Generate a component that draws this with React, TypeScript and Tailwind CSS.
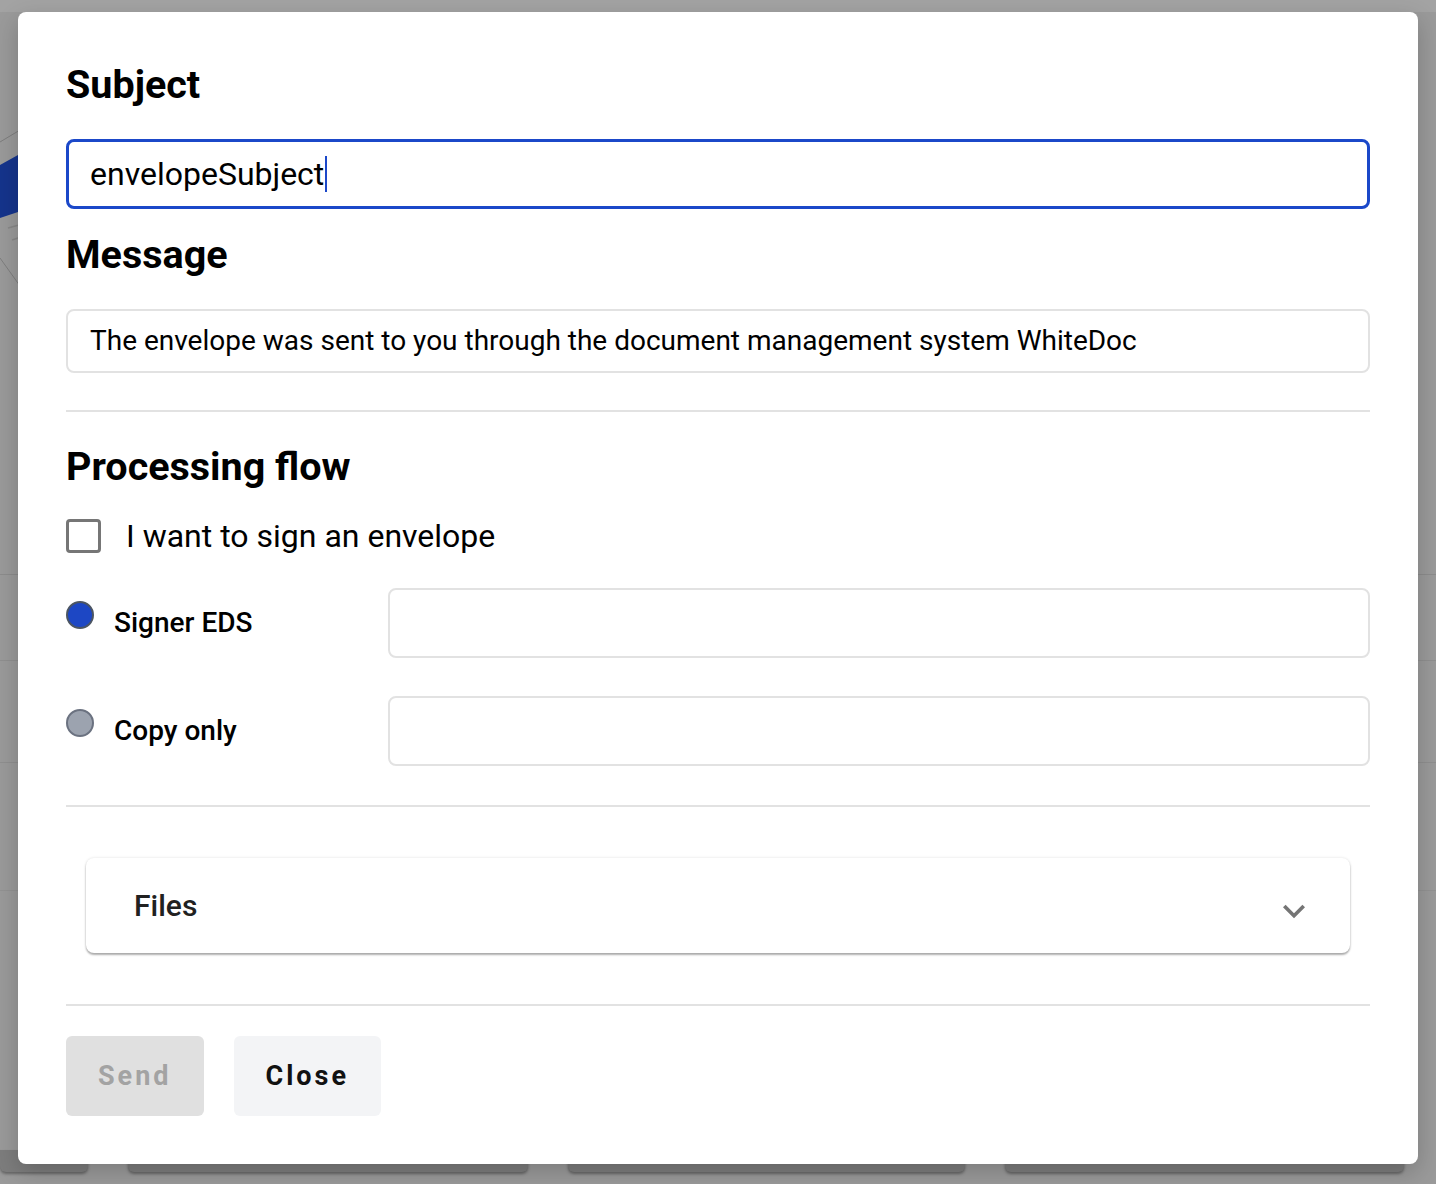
import React from 'react';

const font = { fontFamily: 'Roboto, "Liberation Sans", sans-serif' };

function Divider() {
  return <div className="h-[2px] bg-[#e2e2e2]" />;
}

function Radio({ checked }: { checked: boolean }) {
  return (
    <span
      className={
        'mb-[17px] h-[28px] w-[28px] shrink-0 rounded-full border-2 ' +
        (checked ? 'border-[#4b5563] bg-[#1d47c4]' : 'border-[#6b7280] bg-[#9ca3af]')
      }
    />
  );
}

function RecipientRow({ label, checked }: { label: string; checked: boolean }) {
  return (
    <div className="flex items-center">
      <div className="flex w-[322px] shrink-0 items-center gap-5">
        <Radio checked={checked} />
        <span className="text-[28px] font-medium leading-[34px] text-black">{label}</span>
      </div>
      <div className="h-[70px] flex-1 rounded-lg border-2 border-[#e2e2e2] bg-white" />
    </div>
  );
}

export default function App() {
  return (
    <div className="relative h-[1184px] w-full overflow-hidden bg-[#9a9a9a]" style={font}>
      {/* dimmed page behind the overlay */}
      <div className="absolute inset-x-0 top-0 h-[12px] bg-[#a3a3a3]" />
      <svg className="absolute left-0 top-[100px]" width="30" height="200" viewBox="0 0 30 200">
        <path d="M0 65 L18 55 L18 112 L0 118 Z" fill="#15348c" />
        <path d="M0 42 L30 24" stroke="#7e7e7e" strokeWidth="1" />
        <path d="M8 128 L30 122 M12 140 L30 134" stroke="#888" strokeWidth="1.5" />
        <path d="M0 158 L30 200" stroke="#7e7e7e" strokeWidth="1" />
      </svg>
      <div className="absolute inset-x-0 top-[574px] h-px bg-[#8c8c8c]" />
      <div className="absolute inset-x-0 top-[660px] h-px bg-[#8f8f8f]" />
      <div className="absolute inset-x-0 top-[762px] h-px bg-[#8f8f8f]" />
      <div className="absolute inset-x-0 top-[890px] h-px bg-[#929292]" />
      <div className="absolute inset-x-0 top-[1150px] flex gap-10 pl-0 pr-[32px]">
        <div className="h-[22px] w-[88px] rounded-b-md bg-[#7d7d7d] shadow-[0_2px_3px_rgba(0,0,0,0.35)]" />
        <div className="h-[22px] w-[400px] rounded-b-md bg-[#7d7d7d] shadow-[0_2px_3px_rgba(0,0,0,0.35)]" />
        <div className="h-[22px] w-[398px] rounded-b-md bg-[#7d7d7d] shadow-[0_2px_3px_rgba(0,0,0,0.35)]" />
        <div className="h-[22px] w-[399px] rounded-b-md bg-[#7d7d7d] shadow-[0_2px_3px_rgba(0,0,0,0.35)]" />
      </div>

      {/* dialog */}
      <div className="relative px-[18px] pt-[12px]">
        <div className="flex h-[1152px] flex-col rounded-lg bg-white px-12 pt-[50px] shadow-[0_8px_24px_rgba(0,0,0,0.2)]">
          <h2 className="text-[39.5px] font-bold leading-[46px] text-black">Subject</h2>
          <div className="mt-[31px] flex h-[70px] items-center rounded-lg border-[3px] border-[#1b48c9] px-[21px]">
            <span className="text-[32px] leading-[40px] text-black">envelopeSubject</span>
            <span className="ml-[1px] inline-block h-[36px] w-[2px] bg-[#1b48c9]" />
          </div>

          <h2 className="mt-[23px] text-[39.5px] font-bold leading-[46px] text-black">Message</h2>
          <div className="mt-[31px] flex h-[64px] items-center rounded-lg border-2 border-[#e2e2e2] px-[22px]">
            <span className="text-[28px] leading-[34px] text-black">
              The envelope was sent to you through the document management system WhiteDoc
            </span>
          </div>

          <div className="mt-[37px]">
            <Divider />
          </div>

          <h2 className="mt-[32px] text-[39.5px] font-bold leading-[46px] text-black">Processing flow</h2>
          <label className="mt-[29px] flex items-center gap-[25px]">
            <span className="h-[34px] w-[35px] rounded-[4px] border-[3px] border-[#767676] bg-white" />
            <span className="text-[32px] leading-[34px] text-black">I want to sign an envelope</span>
          </label>

          <div className="mt-[35px] flex flex-col gap-[38px]">
            <RecipientRow label="Signer EDS" checked />
            <RecipientRow label="Copy only" checked={false} />
          </div>

          <div className="mt-[39px]">
            <Divider />
          </div>

          <div className="mx-5 mt-[51px] flex h-[95px] items-center justify-between rounded-lg bg-white pl-12 pr-[34px] shadow-[0_2px_2px_rgba(0,0,0,0.3),0_0_3px_rgba(0,0,0,0.12)]">
            <span className="text-[30px] font-medium text-[#212121]">Files</span>
            <svg width="44" height="44" viewBox="0 0 24 24" className="mt-[10px]">
              <path d="M16.59 8.59 12 13.17 7.41 8.59 6 10l6 6 6-6z" fill="#757575" />
            </svg>
          </div>

          <div className="mt-[51px]">
            <Divider />
          </div>

          <div className="mt-[30px] flex gap-[30px]">
            <button className="h-[80px] rounded-md bg-[#e0e0e0] px-8 text-[27px] font-bold tracking-[3px] text-[#a3a3a3]">
              Send
            </button>
            <button className="h-[80px] rounded-md bg-[#f3f4f6] px-8 text-[27px] font-bold tracking-[3px] text-[#111]">
              Close
            </button>
          </div>
        </div>
      </div>
    </div>
  );
}
